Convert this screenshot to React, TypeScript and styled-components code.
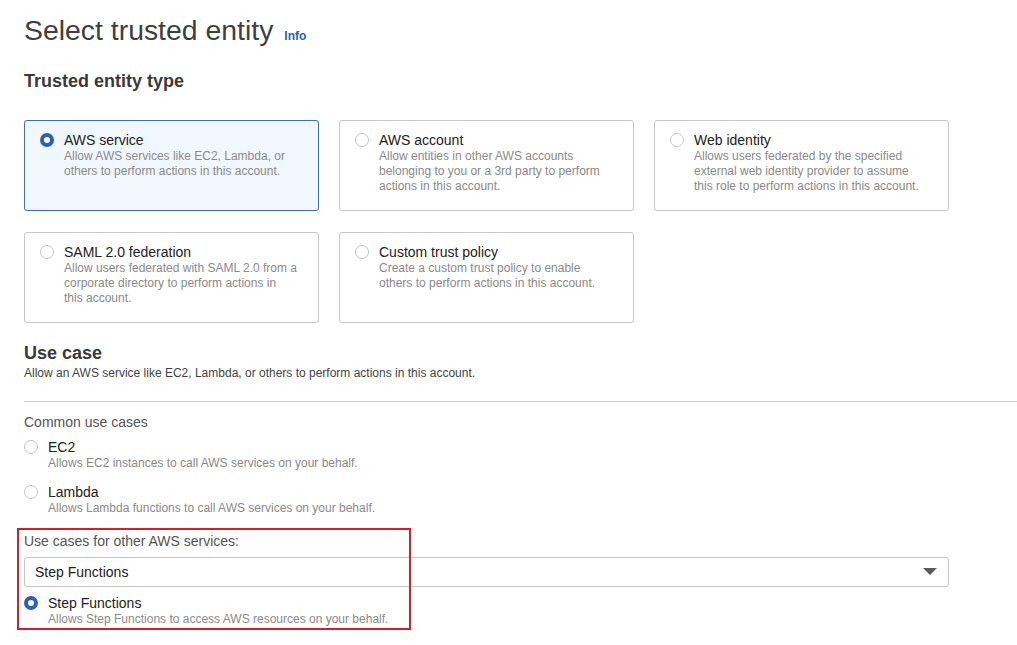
import styled, { createGlobalStyle } from "styled-components";

const GlobalStyle = createGlobalStyle`
    body {
        margin: 0;
        background: #ffffff;
        font-family: "Liberation Sans", Arial, Helvetica, sans-serif;
        color: #16191f;
    }
`;

const Page = styled.div`
    width: 1017px;
    height: 645px;
    padding: 12px 0 0 24px;
    box-sizing: border-box;
    overflow: hidden;
`;

const HeaderRow = styled.div`
    display: flex;
    align-items: baseline;
    gap: 11px;
    height: 36px;
`;

const PageTitle = styled.h1`
    margin: 0;
    font-size: 28.4px;
    line-height: 37px;
    font-weight: 400;
    color: #3f3f3f;
`;

const InfoLink = styled.span`
    font-size: 12px;
    font-weight: 700;
    color: #1f63b8;
`;

const SectionTitle = styled.h2<{ top: number }>`
    margin: ${(p) => p.top}px 0 0;
    font-size: 18px;
    line-height: 24px;
    font-weight: 700;
    color: #3a3a3a;
`;

const CardGrid = styled.div`
    margin-top: 27px;
    display: grid;
    grid-template-columns: repeat(3, 295px);
    grid-auto-rows: 91px;
    column-gap: 20px;
    row-gap: 21px;
`;

const Card = styled.div<{ selected?: boolean }>`
    box-sizing: border-box;
    display: flex;
    align-items: flex-start;
    gap: 10px;
    padding: 10px 12px 0 15px;
    border: 1px solid ${(p) => (p.selected ? "#3d6fb3" : "#c9c9c9")};
    border-radius: 3px;
    background: ${(p) => (p.selected ? "#f1f7ff" : "#ffffff")};
`;

const Radio = styled.span<{ checked?: boolean }>`
    flex: none;
    box-sizing: border-box;
    width: 14px;
    height: 14px;
    margin-top: 2px;
    border-radius: 50%;
    background: #ffffff;
    border: ${(p) => (p.checked ? "4px solid #2a61b5" : "1px solid #c4c4c4")};
`;

const OptionText = styled.div`
    display: flex;
    flex-direction: column;
`;

const OptionLabel = styled.div`
    font-size: 14px;
    line-height: 18px;
    color: #222;
`;

const OptionDesc = styled.div`
    font-size: 12px;
    line-height: 15px;
    color: #8a8a8a;
    white-space: nowrap;
`;

const SubText = styled.div`
    font-size: 12px;
    line-height: 16px;
    color: #444;
`;

const Divider = styled.hr`
    margin: 20px 0 0;
    border: 0;
    border-top: 1px solid #cfcfcf;
`;

const FieldLabel = styled.div<{ top: number }>`
    margin-top: ${(p) => p.top}px;
    font-size: 14px;
    line-height: 18px;
    color: #545454;
`;

const Option = styled.div<{ top: number }>`
    margin-top: ${(p) => p.top}px;
    display: flex;
    align-items: flex-start;
    gap: 10px;
`;

const Highlighted = styled.div`
    position: relative;
    margin-top: 16px;
`;

const RedFrame = styled.div`
    position: absolute;
    left: -7px;
    top: -4px;
    width: 394px;
    height: 102px;
    border: 2px solid #d0202e;
    box-sizing: border-box;
    pointer-events: none;
`;

const Select = styled.div`
    margin-top: 7px;
    width: 925px;
    height: 30px;
    box-sizing: border-box;
    border: 1px solid #c6c6c6;
    border-radius: 3px;
    display: flex;
    align-items: center;
    justify-content: space-between;
    padding: 0 11px 1px 10px;
    font-size: 14px;
    color: #222;
`;

const Caret = styled.span`
    width: 0;
    height: 0;
    border-left: 7px solid transparent;
    border-right: 7px solid transparent;
    border-top: 7px solid #5a5a5a;
`;

const entityTypes = [
    {
        title: "AWS service",
        lines: ["Allow AWS services like EC2, Lambda, or", "others to perform actions in this account."],
        selected: true,
    },
    {
        title: "AWS account",
        lines: ["Allow entities in other AWS accounts", "belonging to you or a 3rd party to perform", "actions in this account."],
    },
    {
        title: "Web identity",
        lines: [
            "Allows users federated by the specified",
            "external web identity provider to assume",
            "this role to perform actions in this account.",
        ],
    },
    {
        title: "SAML 2.0 federation",
        lines: ["Allow users federated with SAML 2.0 from a", "corporate directory to perform actions in", "this account."],
    },
    {
        title: "Custom trust policy",
        lines: ["Create a custom trust policy to enable", "others to perform actions in this account."],
    },
];

function App(): JSX.Element {
    return (
        <Page>
            <GlobalStyle />
            <HeaderRow>
                <PageTitle>Select trusted entity</PageTitle>
                <InfoLink>Info</InfoLink>
            </HeaderRow>

            <SectionTitle top={21}>Trusted entity type</SectionTitle>
            <CardGrid>
                {entityTypes.map((t) => (
                    <Card key={t.title} selected={t.selected}>
                        <Radio checked={t.selected} />
                        <OptionText>
                            <OptionLabel>{t.title}</OptionLabel>
                            {t.lines.map((line) => (
                                <OptionDesc key={line}>{line}</OptionDesc>
                            ))}
                        </OptionText>
                    </Card>
                ))}
            </CardGrid>

            <SectionTitle top={18}>Use case</SectionTitle>
            <SubText>Allow an AWS service like EC2, Lambda, or others to perform actions in this account.</SubText>
            <Divider />

            <FieldLabel top={11}>Common use cases</FieldLabel>
            <Option top={7}>
                <Radio />
                <OptionText>
                    <OptionLabel>EC2</OptionLabel>
                    <OptionDesc>Allows EC2 instances to call AWS services on your behalf.</OptionDesc>
                </OptionText>
            </Option>
            <Option top={12}>
                <Radio />
                <OptionText>
                    <OptionLabel>Lambda</OptionLabel>
                    <OptionDesc>Allows Lambda functions to call AWS services on your behalf.</OptionDesc>
                </OptionText>
            </Option>

            <Highlighted>
                <FieldLabel top={0}>Use cases for other AWS services:</FieldLabel>
                <Select>
                    <span>Step Functions</span>
                    <Caret />
                </Select>
                <Option top={7}>
                    <Radio checked />
                    <OptionText>
                        <OptionLabel>Step Functions</OptionLabel>
                        <OptionDesc>Allows Step Functions to access AWS resources on your behalf.</OptionDesc>
                    </OptionText>
                </Option>
                <RedFrame />
            </Highlighted>
        </Page>
    );
}

export default App;
